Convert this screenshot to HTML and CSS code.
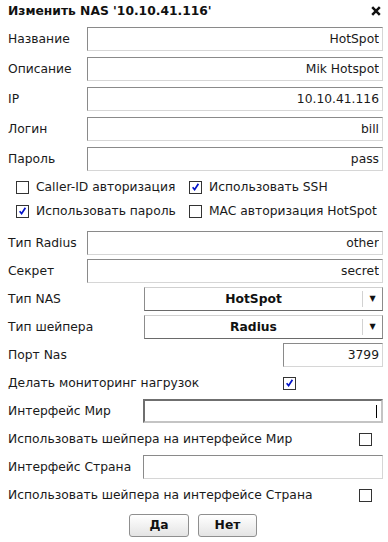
FILE: index.html
```
<!DOCTYPE html>
<html lang="ru">
<head>
    <meta charset="UTF-8">
    <title>Изменить NAS</title>
    <link rel="stylesheet" href="styles.css">
</head>
<body>
<div class="dialog">
    <div class="dialog-title">
        <span>Изменить NAS '10.10.41.116'</span>
        <a class="close" href="javascript:;">
            <svg width="10" height="10" viewBox="0 0 10 10"><path d="M1.2 1.2 L8.8 8.8 M8.8 1.2 L1.2 8.8" stroke="#111" stroke-width="2.5"/></svg>
        </a>
    </div>

    <div class="row first"><label class="lbl">Название</label><input class="txt" type="text" value="HotSpot"></div>
    <div class="row"><label class="lbl">Описание</label><input class="txt" type="text" value="Mik Hotspot"></div>
    <div class="row"><label class="lbl">IP</label><input class="txt" type="text" value="10.10.41.116"></div>
    <div class="row"><label class="lbl">Логин</label><input class="txt" type="text" value="bill"></div>
    <div class="row"><label class="lbl">Пароль</label><input class="txt" type="text" value="pass"></div>

    <div class="checks">
        <div class="check-item"><span class="cb"></span>Caller-ID авторизация</div>
        <div class="check-item"><span class="cb on"></span>Использовать SSH</div>
        <div class="check-item"><span class="cb on"></span>Использовать пароль</div>
        <div class="check-item"><span class="cb"></span>MAC авторизация HotSpot</div>
    </div>

    <div class="row gap-top"><label class="lbl">Тип Radius</label><input class="txt" type="text" value="other"></div>
    <div class="row"><label class="lbl">Секрет</label><input class="txt" type="text" value="secret"></div>
    <div class="row"><label class="lbl">Тип NAS</label>
        <div class="sel"><span class="sel-val">HotSpot</span><span class="sel-arrow">&#9660;</span></div>
    </div>
    <div class="row"><label class="lbl">Тип шейпера</label>
        <div class="sel"><span class="sel-val">Radius</span><span class="sel-arrow">&#9660;</span></div>
    </div>
    <div class="row"><label class="lbl">Порт Nas</label><input class="txt port" type="text" value="3799"></div>
    <div class="row"><label class="lbl wide">Делать мониторинг нагрузок</label><span class="cb on"></span></div>
    <div class="row"><label class="lbl mid">Интерфейс Мир</label>
        <div class="txt iface focus"><span class="caret"></span></div>
    </div>
    <div class="row"><label class="lbl long">Использовать шейпера на интерфейсе Мир</label><span class="cb"></span></div>
    <div class="row"><label class="lbl mid">Интерфейс Страна</label><input class="txt iface" type="text" value=""></div>
    <div class="row"><label class="lbl long">Использовать шейпера на интерфейсе Страна</label><span class="cb"></span></div>

    <div class="buttons">
        <a class="btn yes" href="javascript:;">Да</a>
        <a class="btn no" href="javascript:;">Нет</a>
    </div>
</div>
</body>
</html>
```

FILE: styles.css
```
body {
    margin: 0;
    background: #fff;
    font-family: "DejaVu Sans", Verdana, sans-serif;
    font-size: 12.3px;
    color: #1a1a1a;
}
.dialog {
    width: 388px;
    height: 542px;
}
.dialog-title {
    height: 22px;
    display: flex;
    align-items: center;
    justify-content: space-between;
    padding: 0 7px 0 8px;
    font-weight: bold;
    color: #111;
}
.close {
    display: block;
    width: 10px;
    height: 10px;
}
.close svg {
    display: block;
}
.row {
    display: flex;
    align-items: center;
    height: 24px;
    margin-top: 6px;
    padding: 0 5px 0 8px;
}
.row.first {
    margin-top: 5px;
}
.row.gap-top {
    margin-top: 8px;
}
.row + .row.gap-top ~ .row,
.checks + .row ~ .row {
    margin-top: 4px;
}
.lbl {
    width: 79px;
    flex: none;
    white-space: nowrap;
}
.lbl.mid {
    width: 135px;
}
.lbl.wide {
    width: 275px;
}
.lbl.long {
    width: 351px;
}
.txt {
    flex: 1;
    box-sizing: border-box;
    height: 24px;
    min-width: 0;
    border: 1px solid;
    border-color: #8a8a8a #d6d6d6 #d6d6d6 #8a8a8a;
    padding: 0 3px;
    font-family: "DejaVu Sans", Verdana, sans-serif;
    font-size: 12.3px;
    color: #1a1a1a;
    text-align: right;
    outline: none;
    background: #fff;
}
.txt.port {
    flex: none;
    width: 100px;
    margin-left: auto;
}
.txt.iface {
    flex: none;
    width: 240px;
}
.txt.focus {
    border-width: 2px;
    border-color: #6f6f6f #c4c4c4 #c4c4c4 #6f6f6f;
    display: flex;
    align-items: center;
    justify-content: flex-end;
    padding-right: 4px;
}
.caret {
    width: 1px;
    height: 13px;
    background: #000;
}
.sel {
    width: 239px;
    margin-left: auto;
    box-sizing: border-box;
    height: 24px;
    border: 1px solid;
    border-color: #d0d0d0 #8c8c8c #6a6a6a #8c8c8c;
    display: flex;
    align-items: center;
    font-weight: bold;
    color: #111;
}
.sel-val {
    flex: 1;
    text-align: center;
}
.sel-arrow {
    width: 19px;
    height: 16px;
    line-height: 16px;
    border-left: 1px solid #d2d2d2;
    text-align: center;
    font-size: 8px;
    color: #111;
    font-weight: normal;
}
.checks {
    display: grid;
    grid-template-columns: 173px auto;
    margin-top: 4px;
    padding-left: 16px;
}
.check-item {
    display: flex;
    align-items: center;
    height: 24px;
    white-space: nowrap;
}
.cb {
    flex: none;
    box-sizing: border-box;
    width: 13px;
    height: 13px;
    border: 1px solid #333;
    background: #fff;
    margin-right: 7px;
    position: relative;
}
.row .cb {
    margin-right: 0;
}
.cb.on::after {
    content: "";
    position: absolute;
    left: 2px;
    top: 1px;
    width: 7px;
    height: 8px;
    background: url("data:image/svg+xml;utf8,<svg xmlns='http://www.w3.org/2000/svg' width='7' height='8' viewBox='0 0 7 8'><path d='M0.6 4.2 L2.6 6.6 L6.4 0.8' fill='none' stroke='%230010c8' stroke-width='1.7'/></svg>") no-repeat;
}
.buttons {
    display: flex;
    justify-content: center;
    gap: 9px;
    margin-top: 7px;
    padding-right: 2px;
}
.btn {
    display: block;
    box-sizing: border-box;
    height: 23px;
    line-height: 21px;
    border: 1px solid #8f8f8f;
    border-radius: 3px;
    background: linear-gradient(#ffffff, #e4e4e4);
    text-align: center;
    font-weight: bold;
    color: #111;
    text-decoration: none;
}
.btn.yes {
    width: 60px;
}
.btn.no {
    width: 59px;
}
```
